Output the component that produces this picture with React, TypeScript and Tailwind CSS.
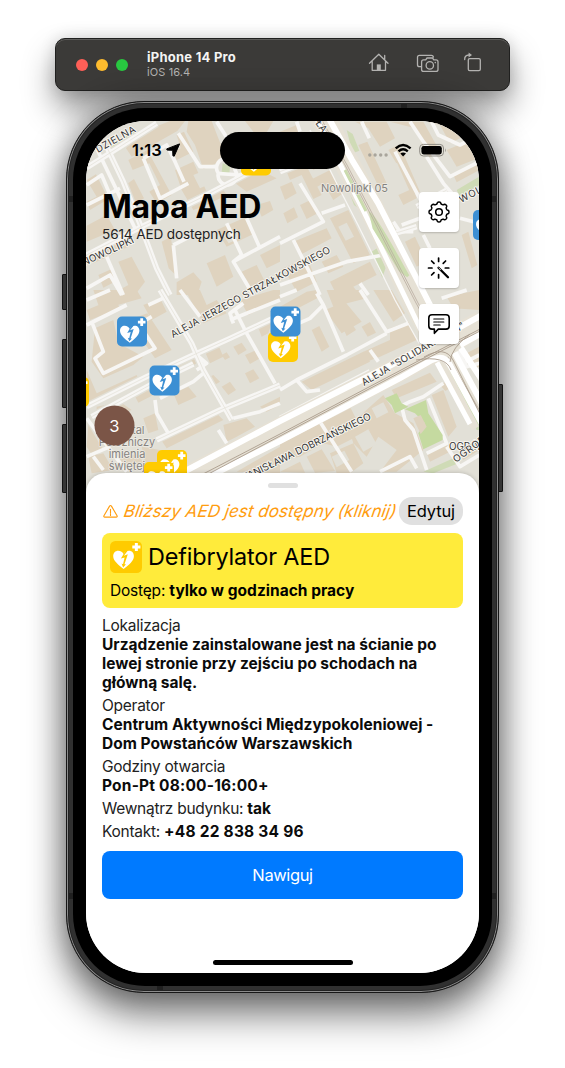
import React from 'react';

type Tile = {
  at: string;
  buildings: string;
  lots?: string;
  greens?: string;
  lanes: string;
  streets: string;
};

const tiles: Tile[] = [
  {
    at: 'translate(60 95) scale(.33333)',
    greens: 'M150 155L195 130 205 152 165 178zM195 125L225 108 240 130 212 148zM488 205l22 8-2 26-24 2z',
    buildings:
      'M225 120L330 78H375L352 108 215 185 198 160zM205 195L262 165 335 300 290 325 268 290 300 270 268 205 218 225zM385 78H455L475 130 492 170 470 205 430 222 405 150 380 110zM350 120L372 110 400 170 350 195 340 170 362 160zM345 225L400 200 440 290 480 270 500 300 440 330 400 345 365 285zM555 78H640L610 130 580 110zM600 150L660 120V170L625 190zM520 260L600 225 650 250 560 290zM80 255L108 238 145 312 90 345 80 320 110 305zM190 275L222 252 252 310 218 330zM80 392L140 360 165 405 80 440zM90 470L190 430 205 455 100 505zM115 540L160 520 175 555 130 578zM175 500L215 485 255 560 225 600H150L205 570zM305 440L332 425 352 545 326 520zM350 562L400 532 425 560 412 600H350zM440 505L495 480 520 545 470 575zM470 405L560 365 585 415 500 455zM590 330L630 318 640 345 605 365zM545 530L590 510 615 560 575 580zM600 480L660 450V500L620 520z',
    lots: 'M400 240L450 220 465 260 420 280zM490 420l40-18 14 25-38 18z',
    lanes:
      'M110 160L225 400M80 330L180 280M80 270L125 240 165 335M250 190L320 150 345 200 372 260M250 190L300 310 385 265M355 115L420 215 470 215M470 235L540 240 600 210M470 80L540 190M540 130L585 190 660 150M340 450L390 425M340 450L350 550M500 385L545 480 520 500 580 600M520 500L660 425M80 580L150 540 185 600M140 485L190 600M560 370L600 460M475 235a28 28 0 1 0 50-10a28 28 0 1 0-50 10',
    streets: 'M80 480L245 395 420 310 600 215 660 185M80 218L180 155 290 85M140 155L190 260 245 400 290 520 330 600',
  },
  {
    at: 'translate(280 95) scale(.33333)',
    greens:
      'M200 105l18 12 20 50-20 8zM530 285L598 245V270L540 305zM270 365L300 370 385 525 370 540 300 440zM190 245L215 290 235 340 222 330zM275 470l18-12 24 60-10 30zM395 550l15 0 25 60h-20zM125 80h20l12 25-14 4z',
    buildings:
      'M225 80H320L345 130 300 155 265 100zM235 150L262 140 320 265 298 280zM345 190L372 180 420 290 395 302zM330 80H430L480 170 445 190 405 100zM440 80H530L560 120 510 145 480 90zM500 165L595 125V190L530 215zM325 165l30-15 22 40-28 15zM520 240L590 205 598 225 530 262zM20 230L75 205 125 300 100 312 65 240 30 255zM80 260L150 225 190 295 160 315 130 265 95 285zM0 275L35 260 50 295 15 315zM10 355l32-18 12 30-32 18zM60 330l30-14 20 40-30 16zM150 370L205 345 270 480 220 505zM40 440L140 400 155 430 60 480zM10 520L80 485 110 560 50 590zM125 500L170 480 190 515 145 535zM150 560L270 500 290 540 220 575 240 600H170zM355 300L400 280 410 310 370 330zM375 440L405 425 440 500 410 515zM545 420L565 410 592 510 575 520zM540 130L598 100V80H560zM0 110L50 90 75 150 20 160zM90 150L125 210 100 225 70 165z',
    lots: 'M200 240l22-10 20 40-22 10zM250 280l25-10 30 55-22 10zM175 395l25-12 22 42-25 12z',
    lanes:
      'M245 80L268 130M390 80L430 140 510 245 598 200M455 80L475 120 540 150 598 120M345 170L440 350M440 185L490 265 520 300M60 265L130 380 0 445M125 355L195 330M365 390L420 370M400 410L360 410 340 380M40 435L90 535 120 600M0 570L100 535 200 500 310 480M240 565L265 600M540 370L598 385M430 420L450 460M50 80L60 110',
    streets: 'M0 230L65 205M345 415L410 395M410 335L500 285',
  },
  {
    at: 'translate(60 290) scale(.33333)',
    buildings:
      'M100 0H230L245 25 120 60zM80 60L165 25 180 55 90 90zM105 115L160 90 175 160 250 200 220 225 130 265 95 215zM205 90L262 70 335 180 285 205zM80 240L110 310 230 255 240 280 130 335 80 340zM250 45L300 25 320 65 275 90zM375 0H420L440 45 470 30 500 70 430 100zM220 310L265 290 280 315 235 338zM345 215L395 190 410 220 365 245zM340 310L385 290 410 320 355 345zM280 290L330 270 340 285 300 310zM435 185L475 165 490 200 450 220zM440 265L460 255 480 275 455 290zM485 290L510 275 528 300 505 315zM555 250L580 238 598 265 570 280zM520 170L545 158 560 180 535 195zM555 195L590 180 600 205 570 222zM590 100L640 80 625 130 605 140zM485 195l15-8 10 15-15 8zM540 30L640 0H660V30L565 75zM300 445L465 365 490 390 320 475zM490 405L560 385 585 410 530 440 500 455zM250 385L285 370 295 420 265 430zM110 350L180 335 215 360 170 375 110 370zM85 405L130 480 100 500 80 470zM245 470L300 480 320 520 260 540zM170 510L235 490 250 520 200 545zM85 500L130 490 160 540 95 550zM530 545L660 470V550zM600 350L660 320V345L620 365z',
    lanes:
      'M80 30L150 0M80 105L200 45M95 95L130 185 105 205 130 250 285 175 245 115M265 45L320 20M360 0L420 80M240 100L275 80M300 325L400 275 430 250M285 330L290 370 325 430M410 195L440 220 410 240M510 90L660 30M525 60L560 130 645 280M80 385L200 545M440 260L495 350M475 420L500 460M520 100L510 70 550 40M520 385L600 365 660 340M80 500L150 470M130 540L100 500',
    streets:
      'M80 350L260 260 400 195 510 145 660 75M95 380L270 285 400 222M300 0L395 160 430 240 515 390M290 450L480 360 660 285',
  },
  {
    at: 'translate(280 290) scale(.33333)',
    greens:
      'M515 260L535 280 598 410V420H590zM470 195l20-10 10 30-15 2zM430 545L520 505 535 520 460 550zM395 0H435L460 60 440 60z',
    buildings:
      'M135 60L195 35 245 95 185 130zM95 120L118 108 148 170 125 185zM185 105L210 92 228 120 200 138zM245 110l25-14 18 32-25 12zM0 50L80 5 110 0 120 20 25 70 0 85zM140 0H245L260 25 160 50zM280 0L335 0 375 70 340 95zM330 115L385 95 410 150 300 200 260 215 240 190 330 150zM65 275L250 185 270 215 95 300zM270 350L310 315 345 370 400 400 430 480 350 545H300L350 480 295 440 260 500 220 460 205 410zM0 460L210 350 250 430 170 470 130 460 60 500 0 510zM335 300L450 248 470 275 350 325zM455 315L490 300 530 410 505 440zM440 490L500 465 510 485 450 515zM550 100L598 80V110L560 130zM560 190L598 170V230L580 235zM500 20L598 0V60L520 55zM150 490L220 460 250 520 210 550H170zM80 500l45-22 40 65-60 5zM0 545L60 515 75 548zM540 485L598 450V480L550 510zM480 285l20-10 12 18-16 10z',
    lots: 'M275 355l35-18 15 30-35 18zM225 440l40-22 25 45-40 22zM155 500l38-18 15 28-38 22z',
    lanes:
      'M0 20L50 0M0 125L90 85 130 45 110 10M130 45L190 185M240 0L320 125 385 100M270 180L295 215M50 270L80 305 120 300M0 300L50 270 200 195 320 130M120 395L215 545M350 355L390 335 430 320 490 280M365 350L375 390 400 420 440 540M445 325L500 460 440 490M300 545L390 500 410 535M500 470L540 530 598 495M510 240L598 195M530 175L560 230 598 220M370 0L420 80M485 25L560 0',
    streets: 'M0 385L270 245',
  },
];

function StreetMap() {
  return (
    <svg className="absolute left-0 top-0 h-[380px] w-[393px]" viewBox="86 121 393 380" fill="none">
      <rect x="86" y="121" width="393" height="380" fill="#e2e0d7" />
      {tiles.map((t) => (
        <g key={t.at} transform={t.at}>
          {t.greens && <path d={t.greens} fill="#cfdbb6" />}
          <path d={t.buildings} fill="#dfd3bf" />
          {t.lots && <path d={t.lots} fill="#e2e0d7" />}
        </g>
      ))}
      {tiles.map((t) => (
        <g key={t.at} transform={t.at} stroke="#f7f6f4" strokeLinejoin="round">
          <path d={t.streets} stroke="#e2e0d7" strokeWidth="24" />
          <path d={t.lanes} strokeWidth="11" />
          <path d={t.streets} strokeWidth="16" />
          <path d={t.streets} stroke="#e6e3db" strokeWidth="2.5" />
        </g>
      ))}
      {/* park behind the courtyard */}
      <g transform="translate(280 290) scale(.33333)">
        <path
          d="M315 325L350 310 365 340 385 350 345 370 335 345zM375 358L438 330 445 370 462 395 488 435 488 450 430 478 415 430 435 400 405 370z"
          fill="#c5daa0"
        />
        <path d="M400 385l22-10 18 35-18 22z" fill="#dfd3bf" />
      </g>
      {/* avenue with tram tracks, north to south */}
      <path d="M321 115L345 160 371 207 413 297 443 353 483 424" stroke="#e6e1d5" strokeWidth="25" />
      <path d="M327 115L352 160 378 203 425 295 452 348 487 413" stroke="#fff" strokeWidth="6" />
      <path d="M315 115L338 160 363 210 405 297 434 357 470 424" stroke="#fff" strokeWidth="5" />
      <path d="M310 130L335 180 358 225 395 300 420 345" stroke="#f7f6f4" strokeWidth="1.3" />
      <path d="M345 170L366 211M371 215C378 221 400 262 408 276L400 270 374 228zM450 368L480 425" stroke="#cbdbae" strokeWidth="3" fill="#cbdbae" />
      <path d="M317 115L345 165 371 215 416 303 443 352 481 417M319 115L347 165 373 215 418 303 445 352 483 416" stroke="#b9aca0" strokeWidth=".8" />
      {/* avenue with tram tracks, west to east */}
      <path d="M180 482L280 430 400 369 482 323" stroke="#e6e1d5" strokeWidth="25" />
      <path d="M176 476L280 421 395 363 482 315" stroke="#fff" strokeWidth="6" />
      <path d="M194 484L280 441 400 378 432 360Q444 354 450 365L482 424" stroke="#fff" strokeWidth="6" />
      <path d="M460 345L482 333M461 348L482 380" stroke="#fff" strokeWidth="6" />
      <path d="M180 486L280 434 420 360 482 328M182 488L280 436 420 362 482 330M424 357Q445 345 453 360L481 416M416 360Q446 355 451 370M450 362Q451 348 470 334" stroke="#aa9c8c" strokeWidth=".9" />
      <g
        fontFamily='Inter, "Noto Sans", sans-serif'
        fontSize="9.8"
        fontWeight="400"
        fill="#333"
        stroke="#f7f5ef"
        strokeWidth="2"
        strokeLinejoin="round"
        paintOrder="stroke"
      >
        <text transform="translate(98 153) rotate(-29.5)" textLength="44">DZIELNA</text>
        <text transform="translate(84 266) rotate(-25)" textLength="56">NOWOLIPKI</text>
        <text transform="translate(173 338) rotate(-28.5)" textLength="180">ALEJA JERZEGO STRZAŁKOWSKIEGO</text>
        <text transform="translate(364 386) rotate(-30)" textLength="117">ALEJA "SOLIDARNOŚCI"</text>
        <text transform="translate(239 484) rotate(-26.2)" textLength="148">STANISŁAWA DOBRZAŃSKIEGO</text>
        <text transform="translate(315 123) rotate(55)">ŁA</text>
        <text transform="translate(461 203) rotate(-27)" textLength="45">WOLIPKI</text>
        <text x="449" y="450">OGRÓD</text>
        <text transform="translate(456 463) rotate(-36)" textLength="46">OGRODO</text>
        <g fill="#85827e" fontSize="11" textAnchor="middle" stroke="#eeebe4" strokeWidth="1.5">
          <text x="354.5" y="192" textLength="67">Nowolipki 05</text>
          <text x="127" y="434">Szpital</text>
          <text x="127" y="446">Położniczy</text>
          <text x="127" y="458">imienia</text>
          <text x="127" y="470">świętej</text>
        </g>
      </g>
      <MapPin x={241} y={145.5} color="#ffcb00" />
      <MapPin x={473} y={210} color="#3c8fd3" />
      <MapPin x={268} y={332} color="#ffcb00" />
      <MapPin x={270.5} y={306.5} color="#3c8fd3" />
      <MapPin x={117} y={316.5} color="#3c8fd3" />
      <MapPin x={149.5} y={365.5} color="#3c8fd3" />
      <MapPin x={59} y={377} color="#ffcb00" />
      <MapPin x={157} y={450} color="#ffcb00" />
      <MapPin x={144} y={462} color="#ffcb00" />
      <circle cx="114.5" cy="425.5" r="20" fill="#7b5547" />
      <text x="114.3" y="431.5" fontFamily="Inter, sans-serif" fontSize="16.5" fill="#fff" textAnchor="middle">3</text>
    </svg>
  );
}

function AedGlyph({ color }: { color: string }) {
  return (
    <g>
      <rect width="30" height="30" rx="5" fill={color} />
      <path d="M12.8 26.3C8 22.3 3 18.6 3 14.2C3 11.2 5 9.2 7.7 9.2C10 9.2 12 10.6 12.8 12.5C13.6 10.6 15.4 9.2 17.8 9.2C20.6 9.2 22.4 11.3 22.4 14.2C22.4 18.6 17.5 22.4 12.8 26.3Z" fill="#fff" />
      <path d="M14.8 8.8L10.2 16.5L13.7 15.4L12.2 21.7L10.8 21.2L12.3 24.8L15 21.9L13.6 21.9L16.7 12.5L13 13.8L16.4 9.4Z" fill={color} />
      <path d="M24.7 1.8V9.4M20.9 5.6H28.5" stroke="#fff" strokeWidth="2.8" />
    </g>
  );
}

function MapPin({ x, y, color }: { x: number; y: number; color: string }) {
  return (
    <g transform={`translate(${x} ${y})`}>
      <AedGlyph color={color} />
    </g>
  );
}

function Toolbar() {
  return (
    <header className="mx-auto flex h-[53px] w-[455px] items-center rounded-[10px] border border-[#20201f] bg-[#3b3a38] pl-5 shadow-[0_18px_32px_rgba(0,0,0,0.42),0_0_16px_rgba(0,0,0,0.14),inset_0_1px_0_#5e5d5b]">
      <div className="flex gap-2">
        <span className="size-3 rounded-full bg-[#ff5f57]" />
        <span className="size-3 rounded-full bg-[#febc2e]" />
        <span className="size-3 rounded-full bg-[#28c840]" />
      </div>
      <div className="ml-[19px] flex-1">
        <p className="text-[13px] leading-[15px] font-bold tracking-[0.25px] text-[#f4f4f3]">iPhone 14 Pro</p>
        <p className="text-[11px] leading-[14px] tracking-[0.1px] text-[#b3b2b1]">iOS 16.4</p>
      </div>
      <svg className="mr-[21px] mb-[5px] h-[24px] w-[122px]" viewBox="366 50 122 24" fill="none" stroke="#b4b3b1" strokeWidth="1.3" strokeLinejoin="round" strokeLinecap="round">
        <path d="M369.5 63.3L378.8 54.3 388 63.3M372.2 61.2V70.3H385.5V61.2M384.7 55.4V59.4" />
        <path d="M376.8 70V64.4H380.8V70Z" fill="#b4b3b1" stroke="none" />
        <path d="M421 66.7H419.5Q417.5 66.7 417.5 64.7V57.3Q417.5 55.3 419.5 55.3H431.5Q433 55.3 433.4 57M423.6 59.8H425.7L427 58H432.5L433.8 59.8H436Q438 59.8 438 61.8V69.4Q438 71.4 436 71.4H423.6Q421.6 71.4 421.6 69.4V61.8Q421.6 59.8 423.6 59.8Z" />
        <circle cx="429.8" cy="65.4" r="3.7" />
        <circle cx="435.3" cy="62.6" r=".8" fill="#b4b3b1" stroke="none" />
        <rect x="468.3" y="58.6" width="12" height="12" rx="1.4" />
        <path d="M464.7 59.5Q464.4 55.3 469 55" />
        <path d="M468.6 52.6L472 55 468.6 57.5Z" fill="#b4b3b1" stroke="none" />
      </svg>
    </header>
  );
}

function StatusBar() {
  return (
    <div className="relative flex h-[58px] items-center justify-between pr-[33px] pl-[46px]">
      <div className="flex items-center gap-1">
        <span className="text-[16.5px] leading-5 font-semibold tracking-[0.05px]">1:13</span>
        <svg className="size-[14px]" viewBox="0 0 14 14">
          <path d="M13.6 .9L8.2 13.2L6.9 12.8L6.7 7.3L1.1 7.1L.7 5.9Z" stroke="#000" strokeLinejoin="round" />
        </svg>
      </div>
      <div className="absolute top-[11px] left-[134px] h-[37px] w-[125px] rounded-full bg-black" />
      <svg className="h-[16px] w-[80px]" viewBox="366 142 80 16" fill="none">
        <g fill="#a9a59c">
          <circle cx="369.8" cy="155" r="1.7" />
          <circle cx="375.1" cy="155" r="1.7" />
          <circle cx="380.7" cy="155" r="1.7" />
          <circle cx="386.1" cy="155" r="1.7" />
        </g>
        <path d="M395.7 148.3Q403 141.7 410.6 148.3M398.5 151.3Q403.1 147.3 407.8 151.3" stroke="#000" strokeWidth="2.4" />
        <path d="M400.3 153.5Q403.1 151.3 406 153.5L403.1 156.4Z" fill="#000" />
        <rect x="419.7" y="144.4" width="23.8" height="11.6" rx="3.6" stroke="#908d86" />
        <rect x="421.4" y="146" width="20.4" height="8.4" rx="2.3" fill="#000" />
        <path d="M445 148.2Q446.3 150.2 445 152.2Z" fill="#908d86" />
      </svg>
    </div>
  );
}

const cogOutline =
  Array.from({ length: 160 }, (_, i) => {
    const angle = (i / 160) * Math.PI * 2;
    const radius = 9 + 0.95 * Math.tanh(2 * Math.cos(8 * angle));
    const x = (12 + radius * Math.sin(angle)).toFixed(2);
    const y = (12 - radius * Math.cos(angle)).toFixed(2);
    return `${i === 0 ? 'M' : 'L'}${x} ${y}`;
  }).join('') + 'Z';

function MapButton({ label, children }: { label: string; children: React.ReactNode }) {
  return (
    <button aria-label={label} className="flex size-10 items-center justify-center rounded bg-white shadow-[0_1px_2px_rgba(0,0,0,0.2)]">
      <svg className="size-6" viewBox="0 0 24 24" fill="none" stroke="#000" strokeWidth="1.5" strokeLinejoin="round" strokeLinecap="round">
        {children}
      </svg>
    </button>
  );
}

function Field({ label, children }: { label: string; children: React.ReactNode }) {
  return (
    <div>
      <dt>{label}</dt>
      <dd className="font-bold tracking-[0.01px] text-[#0b0b0b]">{children}</dd>
    </div>
  );
}

function Sheet() {
  return (
    <section className="absolute inset-x-0 top-[352px] bottom-0 rounded-t-[20px] bg-white px-4 text-[15.5px] leading-[19px] tracking-[-0.27px] shadow-[0_0_4px_rgba(0,0,0,0.2)]">
      <div className="mx-auto h-6 w-[30px] pt-[10px]">
        <div className="h-[5px] rounded-full bg-[#e0e0e0]" />
      </div>
      <div className="flex h-7 items-center justify-between whitespace-nowrap">
        <div className="flex items-center gap-[6px] text-[#ff9d0f]">
          <svg className="ml-[1px] size-[15px]" viewBox="0 0 16 16" fill="none" stroke="currentColor" strokeWidth="1.2" strokeLinejoin="round">
            <path d="M9 2.3L15 12.5Q15.6 14 14 14H2Q.4 14 1 12.5L7 2.3Q8 1 9 2.3Z" />
            <path d="M8 5.6V9.8M8 11V12.2" strokeLinecap="round" />
          </svg>
          <span className="inline-block -skew-x-[10deg] text-[17px] tracking-[0.05px] italic">Bliższy AED jest dostępny (kliknij)</span>
        </div>
        <button className="h-7 w-16 rounded-[13px] bg-[#e0e0e0] text-[16.5px] tracking-[-0.15px]">Edytuj</button>
      </div>
      <div className="mt-2 h-[75px] rounded-lg bg-[#ffeb3b] p-2">
        <div className="flex h-8 items-center gap-[6px]">
          <svg className="size-8" viewBox="0 0 30 30"><AedGlyph color="#ffcb00" /></svg>
          <h2 className="text-[23.4px] leading-8 tracking-[-0.15px]">Defibrylator AED</h2>
        </div>
        <p className="mt-2 tracking-[-0.2px]">Dostęp: <b className="tracking-[0.02px]">tylko w godzinach pracy</b></p>
      </div>
      <dl className="mt-2 flex flex-col gap-1 whitespace-nowrap text-[#222]">
        <Field label="Lokalizacja">
          Urządzenie zainstalowane jest na ścianie po<br />lewej stronie przy zejściu po schodach na<br />główną salę.
        </Field>
        <Field label="Operator">
          Centrum Aktywności Międzypokoleniowej -<br />Dom Powstańców Warszawskich
        </Field>
        <Field label="Godziny otwarcia"><span className="tracking-[0.2px]">Pon-Pt 08:00-16:00+</span></Field>
        <div>Wewnątrz budynku: <b className="tracking-normal text-[#0b0b0b]">tak</b></div>
        <div>Kontakt: <b className="tracking-[0.22px] text-[#0b0b0b]">+48 22 838 34 96</b></div>
      </dl>
      <button className="mt-[10px] h-12 w-full rounded-lg bg-[#007aff] text-[16.5px] tracking-[-0.4px] text-white">Nawiguj</button>
      <div className="mx-auto mt-[61px] h-[5px] w-[140px] rounded-full bg-black" />
    </section>
  );
}

function Phone() {
  return (
    <main className="relative mx-auto mt-[10px] h-[892px] w-[433px] rounded-[78px] border border-[#171717] bg-[#303030] p-[6px] shadow-[0_22px_38px_rgba(0,0,0,0.5),0_0_30px_rgba(0,0,0,0.34),inset_0_0_0_1px_#8b8b8b,inset_0_0_0_2px_#222]">
      <div className="absolute top-[172px] -left-[5px] h-[36px] w-[5px] rounded-l-[1px] border border-[#111] bg-[#353535]" />
      <div className="absolute top-[237px] -left-[5px] h-[69px] w-[5px] rounded-l-[1px] border border-[#111] bg-[#353535]" />
      <div className="absolute top-[322px] -left-[5px] h-[69px] w-[5px] rounded-l-[1px] border border-[#111] bg-[#353535]" />
      <div className="absolute top-[282px] -right-[5px] h-[108px] w-[5px] rounded-r-[1px] border border-[#111] bg-[#353535]" />
      <div className="absolute top-[94px] left-[2px] h-[6px] w-[5px] bg-[#202020]" />
      <div className="absolute top-[94px] right-[2px] h-[6px] w-[5px] bg-[#202020]" />
      <div className="absolute top-[791px] left-[2px] h-[6px] w-[5px] bg-[#202020]" />
      <div className="absolute top-[791px] right-[2px] h-[6px] w-[5px] bg-[#202020]" />
      <div className="absolute top-[2px] left-[334px] h-[5px] w-[6px] bg-[#202020]" />
      <div className="absolute bottom-[2px] left-[90px] h-[5px] w-[6px] bg-[#202020]" />
      <div className="relative h-full rounded-[72px] bg-black px-[13px] py-[13px]">
        <div className="relative h-[852px] w-[393px] overflow-hidden rounded-[60px] bg-white text-black">
          <StreetMap />
          <div className="relative">
            <StatusBar />
            <div className="flex justify-between pr-5 pl-4">
              <div className="pt-[9px]">
                <h1 className="text-[32px] leading-[38px] font-bold tracking-[-0.3px]">Mapa AED</h1>
                <p className="text-[13.6px] leading-[17px] tracking-[-0.13px] text-[#222]">5614 AED dostępnych</p>
              </div>
              <div className="flex flex-col gap-4 pt-[13px]">
                <MapButton label="Ustawienia">
                  <path d={cogOutline} />
                  <circle cx="12" cy="12" r="3.3" />
                </MapButton>
                <MapButton label="Najbliższy AED">
                  <path d="M11.6 2V5.4M11.6 18.6V22M1.5 12H5M18.3 12H21.8M4.6 5L7 7.4M18.6 5L16.2 7.4M4.6 19L7 16.6" strokeWidth="1.7" />
                  <path d="M11.5 11.8L21 21.3" strokeWidth="2.3" />
                  <path d="M11.9 12L13.6 13.7" stroke="#fff" strokeWidth=".8" />
                </MapButton>
                <MapButton label="Opinie">
                  <path d="M5 2.8H19Q22.2 2.8 22.2 6V14Q22.2 17.1 19 17.1H11.3L7.4 21.3V17.1H5Q1.8 17.1 1.8 14V6Q1.8 2.8 5 2.8Z" strokeWidth="1.6" />
                  <path d="M6.8 7H16.8M6.8 10H16.8M6.8 13H13.2" strokeWidth="1.2" />
                </MapButton>
              </div>
            </div>
          </div>
          <Sheet />
        </div>
      </div>
    </main>
  );
}

export default function App() {
  return (
    <div className="h-[1068px] w-[565px] overflow-hidden bg-white pt-[38px] font-[Inter,'Noto_Sans',sans-serif]">
      <Toolbar />
      <Phone />
    </div>
  );
}
